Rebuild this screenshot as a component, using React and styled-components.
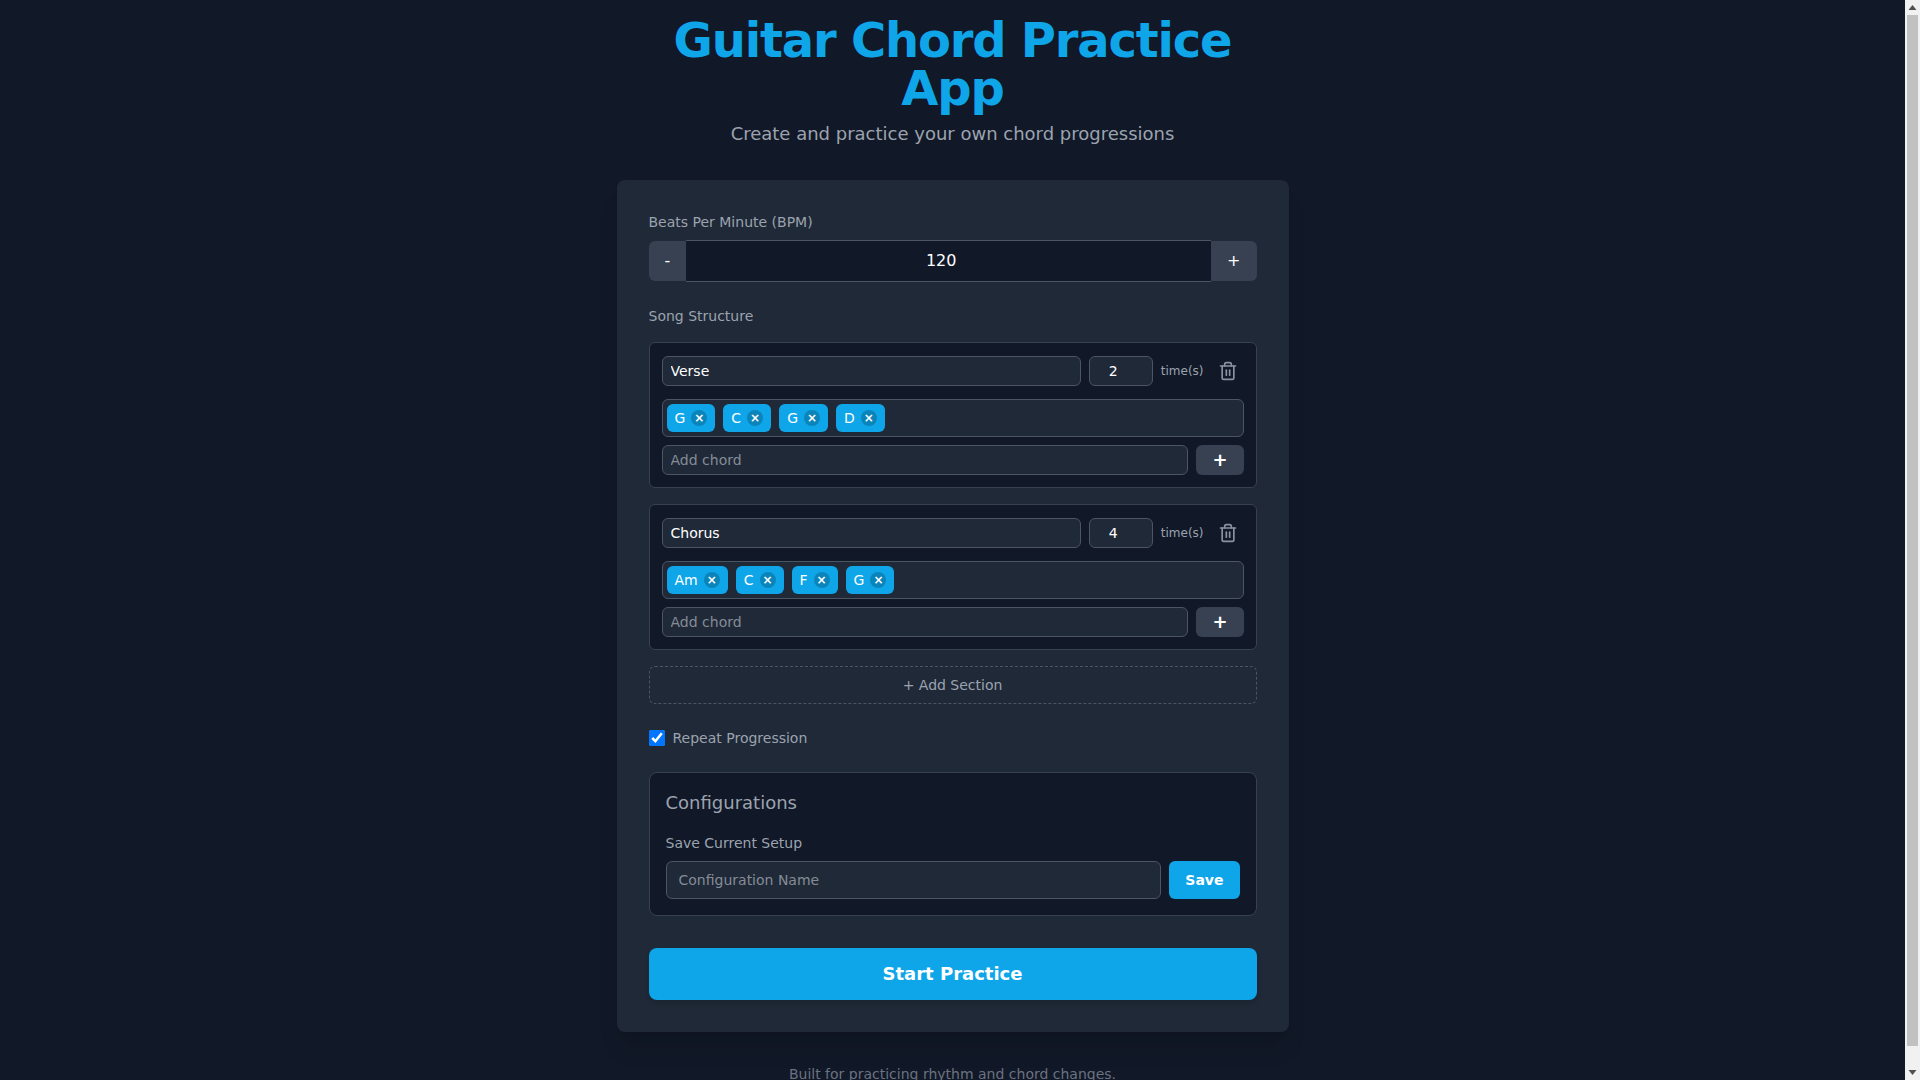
import React, { useState } from "react";
import styled, { createGlobalStyle } from "styled-components";
import { Trash2 } from "lucide-react";

const GlobalStyle = createGlobalStyle`
  * {
    box-sizing: border-box;
  }

  body {
    margin: 0;
    padding-right: 15px;
    background-color: #111827;
    color: #ffffff;
    font-family: "DejaVu Sans", sans-serif;
  }

  input::placeholder {
    color: #858c98;
    opacity: 1;
  }
`;

const ScrollTrack = styled.div`
  position: fixed;
  top: 0;
  right: 0;
  bottom: 0;
  display: flex;
  flex-direction: column;
  justify-content: space-between;
  width: 15px;
  background-color: #f1f1f1;
`;

const ScrollThumb = styled.div`
  flex: 1;
  margin: 0 2px 19px;
  background-color: #c1c1c1;
`;

const ScrollArrow = styled.svg`
  display: block;
  width: 15px;
  height: 15px;
  flex: none;
  fill: #505050;
`;

const Page = styled.div`
  max-width: 672px;
  margin: 0 auto;
  padding: 16px 0;
`;

const Header = styled.header`
  text-align: center;
  margin-bottom: 32px;
`;

const Title = styled.h1`
  margin: 0;
  font-size: 48px;
  line-height: 48px;
  font-weight: 700;
  letter-spacing: -1.2px;
  color: #0ea5e9;
`;

const Subtitle = styled.p`
  margin: 8px 0 0;
  font-size: 18px;
  line-height: 28px;
  color: #9ca3af;
`;

const Card = styled.main`
  padding: 32px;
  background-color: #1f2937;
  border-radius: 8px;
  box-shadow: 0 20px 25px -5px rgba(0, 0, 0, 0.1), 0 8px 10px -6px rgba(0, 0, 0, 0.1);
`;

const Label = styled.label`
  display: block;
  margin-bottom: ${(props) => props.$gap || "8px"};
  font-size: 14px;
  line-height: 20px;
  color: #9ca3af;
`;

const Stepper = styled.div`
  display: flex;
  align-items: center;
  margin-bottom: 24px;
`;

const StepButton = styled.button`
  padding: 8px 16px;
  border: none;
  background-color: #374151;
  color: #ffffff;
  font-family: inherit;
  font-size: 16px;
  line-height: 24px;
  cursor: pointer;
  border-radius: ${(props) => (props.$side === "left" ? "6px 0 0 6px" : "0 6px 6px 0")};
`;

const BpmInput = styled.input`
  flex: 1;
  min-width: 0;
  padding: 8px;
  border: solid #4b5563;
  border-width: 1px 0;
  background-color: #111827;
  color: #ffffff;
  font-family: inherit;
  font-size: 16px;
  line-height: 24px;
  text-align: center;
  outline: none;
`;

const SectionList = styled.div`
  display: flex;
  flex-direction: column;
  gap: 16px;
`;

const SectionBox = styled.section`
  padding: 12px;
  background-color: #111827;
  border: 1px solid #374151;
  border-radius: 6px;
`;

const SectionHead = styled.div`
  display: flex;
  align-items: center;
  gap: 8px;
  margin-bottom: 12px;
`;

const SmallInput = styled.input`
  flex: ${(props) => (props.$fixed ? "none" : "1")};
  width: ${(props) => (props.$fixed ? "64px" : "auto")};
  min-width: 0;
  padding: 4px 8px;
  background-color: #1f2937;
  border: 1px solid #4b5563;
  border-radius: 6px;
  color: #ffffff;
  font-family: inherit;
  font-size: 14px;
  line-height: 20px;
  text-align: ${(props) => (props.$fixed ? "center" : "left")};
  outline: none;
`;

const TimesText = styled.span`
  font-size: 12px;
  line-height: 16px;
  color: #9ca3af;
`;

const DeleteButton = styled.button`
  display: flex;
  padding: 6px;
  border: none;
  background: none;
  color: #8b92a0;
  cursor: pointer;
`;

const ChordBox = styled.div`
  display: flex;
  flex-wrap: wrap;
  gap: 8px;
  padding: 4px;
  margin-bottom: 8px;
  background-color: #1f2937;
  border: 1px solid #4b5563;
  border-radius: 6px;
`;

const ChordChip = styled.span`
  display: inline-flex;
  align-items: center;
  padding: 4px 8px;
  background-color: #0ea5e9;
  border-radius: 6px;
  color: #ffffff;
  font-size: 14px;
  line-height: 20px;
`;

const RemoveChord = styled.button`
  display: flex;
  align-items: center;
  justify-content: center;
  width: 16px;
  height: 16px;
  margin-left: 6px;
  padding: 0;
  border: none;
  border-radius: 50%;
  background-color: rgba(0, 0, 0, 0.2);
  color: #ffffff;
  font-family: inherit;
  font-size: 12px;
  font-weight: 700;
  line-height: 16px;
  cursor: pointer;
`;

const AddRow = styled.div`
  display: flex;
  gap: 8px;
`;

const AddChordButton = styled.button`
  padding: 0 16px;
  border: none;
  border-radius: 6px;
  background-color: #374151;
  color: #ffffff;
  font-family: inherit;
  font-size: 18px;
  font-weight: 700;
  line-height: 28px;
  cursor: pointer;
`;

const AddSection = styled.button`
  display: block;
  width: 100%;
  margin-top: 16px;
  padding: 8px;
  background: none;
  border: 1px dashed #4b5563;
  border-radius: 6px;
  color: #9ca3af;
  font-family: inherit;
  font-size: 14px;
  line-height: 20px;
  cursor: pointer;
`;

const RepeatRow = styled.label`
  display: flex;
  align-items: center;
  gap: 8px;
  margin-top: 24px;
  font-size: 14px;
  line-height: 20px;
  color: #9ca3af;
`;

const Checkbox = styled.input`
  width: 16px;
  height: 16px;
  margin: 0;
`;

const ConfigBox = styled.section`
  margin-top: 24px;
  padding: 16px;
  background-color: #111827;
  border: 1px solid #374151;
  border-radius: 8px;
`;

const ConfigTitle = styled.h2`
  margin: 0 0 16px;
  font-size: 18px;
  line-height: 28px;
  font-weight: 400;
  color: #9ca3af;
`;

const ConfigRow = styled.div`
  display: flex;
  gap: 8px;
`;

const ConfigInput = styled.input`
  flex: 1;
  min-width: 0;
  padding: 8px 12px;
  background-color: #1f2937;
  border: 1px solid #4b5563;
  border-radius: 6px;
  color: #ffffff;
  font-family: inherit;
  font-size: 14px;
  line-height: 20px;
  outline: none;
`;

const SaveButton = styled.button`
  padding: 8px 16px;
  border: none;
  border-radius: 6px;
  background-color: #0ea5e9;
  color: #ffffff;
  font-family: inherit;
  font-size: 14px;
  font-weight: 700;
  line-height: 20px;
  cursor: pointer;
`;

const StartButton = styled.button`
  display: block;
  width: 100%;
  margin-top: 32px;
  padding: 12px;
  border: none;
  border-radius: 8px;
  background-color: #0ea5e9;
  color: #ffffff;
  font-family: inherit;
  font-size: 18px;
  font-weight: 700;
  line-height: 28px;
  cursor: pointer;
  box-shadow: 0 4px 6px -1px rgba(0, 0, 0, 0.1), 0 2px 4px -2px rgba(0, 0, 0, 0.1);
`;

const Footer = styled.footer`
  margin-top: 32px;
  text-align: center;
  font-size: 14px;
  line-height: 20px;
  color: #6b7280;
`;

const initialSections = [
  { id: 1, name: "Verse", times: 2, chords: ["G", "C", "G", "D"] },
  { id: 2, name: "Chorus", times: 4, chords: ["Am", "C", "F", "G"] },
];

const App = () => {
  const [bpm, setBpm] = useState(120);
  const [sections, setSections] = useState(initialSections);
  const [repeat, setRepeat] = useState(true);

  const updateSection = (id, changes) => {
    setSections(sections.map((s) => (s.id === id ? { ...s, ...changes } : s)));
  };

  return (
    <>
      <GlobalStyle />
      <Page>
        <Header>
          <Title>Guitar Chord Practice App</Title>
          <Subtitle>Create and practice your own chord progressions</Subtitle>
        </Header>

        <Card>
          <Label>Beats Per Minute (BPM)</Label>
          <Stepper>
            <StepButton $side="left" onClick={() => setBpm(bpm - 1)}>-</StepButton>
            <BpmInput type="number" value={bpm} onChange={(e) => setBpm(e.target.value)} />
            <StepButton $side="right" onClick={() => setBpm(bpm + 1)}>+</StepButton>
          </Stepper>

          <Label $gap="16px">Song Structure</Label>
          <SectionList>
            {sections.map((section) => (
              <SectionBox key={section.id}>
                <SectionHead>
                  <SmallInput
                    type="text"
                    value={section.name}
                    onChange={(e) => updateSection(section.id, { name: e.target.value })}
                  />
                  <SmallInput
                    $fixed
                    type="number"
                    value={section.times}
                    onChange={(e) => updateSection(section.id, { times: e.target.value })}
                  />
                  <TimesText>time(s)</TimesText>
                  <DeleteButton
                    aria-label="Delete section"
                    onClick={() => setSections(sections.filter((s) => s.id !== section.id))}
                  >
                    <Trash2 size={20} />
                  </DeleteButton>
                </SectionHead>
                <ChordBox>
                  {section.chords.map((chord, i) => (
                    <ChordChip key={i}>
                      {chord}
                      <RemoveChord
                        onClick={() =>
                          updateSection(section.id, { chords: section.chords.filter((_, j) => j !== i) })
                        }
                      >
                        ×
                      </RemoveChord>
                    </ChordChip>
                  ))}
                </ChordBox>
                <AddRow>
                  <SmallInput type="text" placeholder="Add chord" />
                  <AddChordButton>+</AddChordButton>
                </AddRow>
              </SectionBox>
            ))}
          </SectionList>
          <AddSection>+ Add Section</AddSection>

          <RepeatRow>
            <Checkbox type="checkbox" checked={repeat} onChange={(e) => setRepeat(e.target.checked)} />
            Repeat Progression
          </RepeatRow>

          <ConfigBox>
            <ConfigTitle>Configurations</ConfigTitle>
            <Label>Save Current Setup</Label>
            <ConfigRow>
              <ConfigInput type="text" placeholder="Configuration Name" />
              <SaveButton>Save</SaveButton>
            </ConfigRow>
          </ConfigBox>

          <StartButton>Start Practice</StartButton>
        </Card>

        <Footer>Built for practicing rhythm and chord changes.</Footer>
      </Page>

      {/* the reference shows the browser's classic scrollbar */}
      <ScrollTrack>
        <ScrollArrow viewBox="0 0 15 15">
          <polygon points="7.5,5 11.5,10 3.5,10" />
        </ScrollArrow>
        <ScrollThumb />
        <ScrollArrow viewBox="0 0 15 15">
          <polygon points="3.5,5 11.5,5 7.5,10" />
        </ScrollArrow>
      </ScrollTrack>
    </>
  );
};

export default App;
